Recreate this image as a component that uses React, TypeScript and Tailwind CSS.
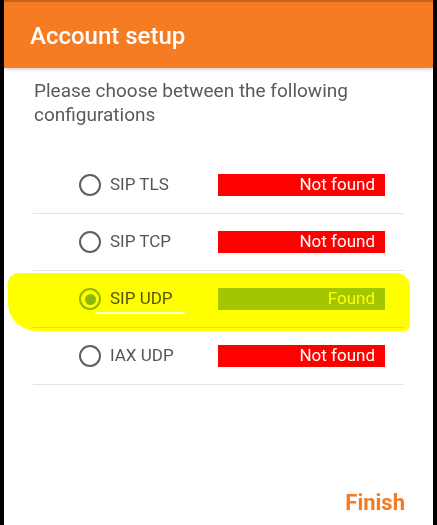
import React from 'react';

type Config = {
  name: string;
  found: boolean;
  selected?: boolean;
};

const configs: Config[] = [
  { name: 'SIP TLS', found: false },
  { name: 'SIP TCP', found: false },
  { name: 'SIP UDP', found: true, selected: true },
  { name: 'IAX UDP', found: false },
];

function Radio({ checked }: { checked?: boolean }) {
  if (checked) {
    return (
      <span className="flex h-[22px] w-[22px] items-center justify-center rounded-full border-2 border-[#8fb82a]">
        <span className="h-[11px] w-[11px] rounded-full bg-[#8fb82a]" />
      </span>
    );
  }
  return <span className="block h-[22px] w-[22px] rounded-full border-2 border-[#5f5f5f]" />;
}

function ConfigRow({ config }: { config: Config }) {
  return (
    <div className="flex h-[57px] items-center border-b border-[#e4e4e4] pl-[46px] pr-[19px]">
      <Radio checked={config.selected} />
      <span className="ml-[9px] w-[100px] text-[17px] text-[#555555]">{config.name}</span>
      <div
        className={
          config.found
            ? 'ml-auto flex h-[22px] w-[167px] items-center justify-end bg-[#a2c600] pr-[10px] text-[17px] text-white'
            : 'ml-auto flex h-[22px] w-[167px] items-center justify-end bg-[#ff0000] pr-[10px] text-[17px] text-white'
        }
      >
        {config.found ? 'Found' : 'Not found'}
      </div>
    </div>
  );
}

export default function App() {
  return (
    <div
      className="relative flex h-[525px] w-[437px] flex-col border-x-4 border-black bg-white"
      style={{ fontFamily: 'Roboto, "Noto Sans", sans-serif' }}
    >
      {/* Toolbar */}
      <div className="flex h-[68px] items-center border-t-2 border-[#c9641c] bg-[#f57c22] pl-[26px] shadow-[0_2px_3px_rgba(0,0,0,0.15)]">
        <h1 className="pt-[2px] text-[24px] font-medium text-white">Account setup</h1>
      </div>

      <p className="mt-[11px] pl-[30px] pr-[20px] text-[19px] leading-[24px] text-[#5a5a5a]">
        Please choose between the following configurations
      </p>

      <div className="relative mx-[29px] mt-[30px]">
        {configs.map((c) => (
          <ConfigRow key={c.name} config={c} />
        ))}

        {/* marker highlight */}
        <div className="pointer-events-none absolute left-[-25px] top-[116px] h-[58px] w-[402px] rounded-bl-[28px] rounded-br-[6px] rounded-tl-[10px] rounded-tr-[14px] bg-[#ffff00] mix-blend-multiply" />
        <div className="pointer-events-none absolute left-[62px] top-[155px] h-[2px] w-[90px] rounded-full bg-white/80" />
      </div>

      <div className="mt-auto flex justify-end pb-[6px] pr-[28px]">
        <button className="text-[22px] font-bold text-[#f47b20]">Finish</button>
      </div>
    </div>
  );
}
